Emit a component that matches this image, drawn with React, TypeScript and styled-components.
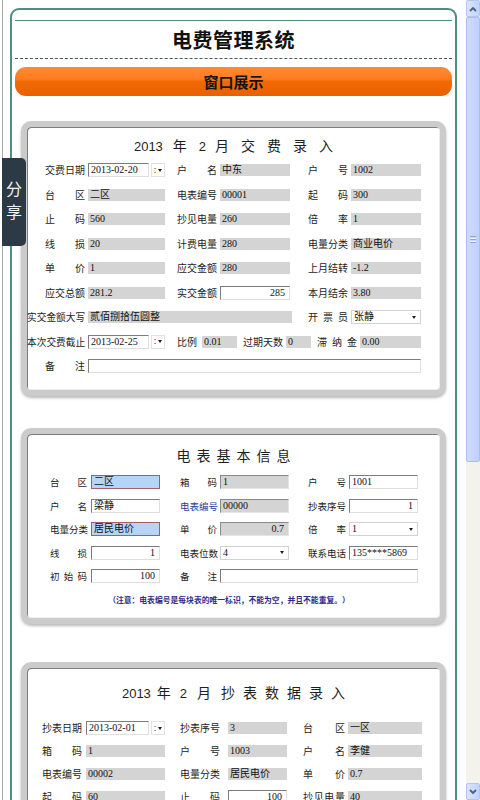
import React from "react";
import styled, { createGlobalStyle, css } from "styled-components";

const GlobalStyle = createGlobalStyle`
  html, body { margin: 0; padding: 0; background: #ffffff; }
  body { font-family: "Noto Sans CJK SC", "Noto Sans", sans-serif; color: #1a1a1a; }
  * { box-sizing: border-box; }
`;

const Screen = styled.div`
  display: flex;
  height: 800px;
  overflow: hidden;
  background: #fff;
`;

const Page = styled.div`
  position: relative;
  flex: 1;
  min-width: 0;
  margin-left: 2px;
  border-left: 1px solid #a9a9a9;
  padding: 8px 9px 0 7px;
`;

const Frame = styled.div`
  border: 2px solid #4e8c84;
  border-bottom: none;
  border-radius: 9px 9px 0 0;
  padding: 10px 3px 40px;
`;

const TopRule = styled.div`
  height: 1px;
  background: #4e8c84;
`;

const SiteTitle = styled.h1`
  margin: 0;
  height: 37px;
  line-height: 37px;
  text-align: center;
  font-size: 20px;
  font-weight: 700;
  color: #111;
  letter-spacing: 0.5px;
`;

const DashRule = styled.div`
  border-top: 1px dashed #3e5868;
`;

const Banner = styled.div`
  margin-top: 8px;
  height: 29px;
  border-radius: 11px;
  background: linear-gradient(to bottom, #ff8a35 0%, #ff7b20 42%, #f16905 50%, #e96000 100%);
  text-align: center;
  line-height: 29px;
  font-size: 15px;
  font-weight: 700;
  color: #151515;
`;

const Card = styled.section<{ $mt: number; $pt: number; $pb: number }>`
  margin: ${(p) => p.$mt}px 6px 0;
  padding: ${(p) => p.$pt}px 0 ${(p) => p.$pb}px;
  background: #fff;
  border: 6px solid #cbcbcb;
  border-radius: 10px;
  box-shadow: 0 2px 3px rgba(0, 0, 0, 0.28), inset 1px 1px 0 #7d7d7d, inset -1px -1px 0 #eeeeee;
`;

const CardTitle = styled.div<{ $mb: number }>`
  display: flex;
  justify-content: center;
  align-items: baseline;
  height: 20px;
  line-height: 20px;
  margin-bottom: ${(p) => p.$mb}px;
  font-size: 14px;
  color: #1e1e1e;
`;

const TitleNum = styled.span<{ $ml?: number }>`
  font-family: "Liberation Sans", Arial, sans-serif;
  font-size: 13px;
  margin-left: ${(p) => p.$ml ?? 0}px;
`;

const TitleWord = styled.span<{ $ml?: number; $ls?: number }>`
  margin-left: ${(p) => p.$ml ?? 0}px;
  letter-spacing: ${(p) => p.$ls ?? 0}px;
  margin-right: ${(p) => -(p.$ls ?? 0)}px;
`;

const Row = styled.div<{ $h: number }>`
  display: flex;
  align-items: center;
  height: ${(p) => p.$h}px;
`;

const LabelBox = styled.div<{ $w: number; $ml: number; $fs: number; $link?: boolean }>`
  flex: none;
  display: flex;
  justify-content: space-between;
  width: ${(p) => p.$w}px;
  margin-left: ${(p) => p.$ml}px;
  font-size: ${(p) => p.$fs}px;
  line-height: 14px;
  white-space: nowrap;
  color: ${(p) => (p.$link ? "#2f3aa6" : "#1c1c1c")};
`;

type Variant = "gray" | "grayInset" | "white" | "focus";

const variants = {
  gray: css`
    height: 12px;
    background: #d4d4d4;
  `,
  grayInset: css`
    height: 14px;
    background: #d4d4d4;
    border-style: solid;
    border-width: 1px;
    border-color: #8a8a8a #e4e4e4 #e4e4e4 #8a8a8a;
  `,
  white: css`
    height: 14px;
    background: #fff;
    border-style: solid;
    border-width: 1px;
    border-color: #7c7c7c #dedede #dedede #7c7c7c;
  `,
  focus: css`
    height: 14px;
    background: #b5d5f7;
    border: 1px solid #a55d6a;
  `,
};

const Field = styled.div<{ $w: number; $ml?: number; $v?: Variant; $right?: boolean }>`
  flex: none;
  width: ${(p) => p.$w}px;
  margin-left: ${(p) => p.$ml ?? 0}px;
  padding: 0 ${(p) => (p.$right ? 4 : 2)}px 0 2px;
  display: flex;
  align-items: center;
  justify-content: ${(p) => (p.$right ? "flex-end" : "flex-start")};
  font-family: "Liberation Serif", "Noto Sans CJK SC", serif;
  font-size: 10px;
  line-height: 1;
  color: #111;
  white-space: nowrap;
  overflow: hidden;
  ${(p) => variants[p.$v ?? "gray"]}
`;

const DropBtn = styled.div`
  flex: none;
  width: 14px;
  height: 14px;
  margin-left: 2px;
  border: 1px solid #e2e2e2;
  background: #fff;
  display: flex;
  align-items: center;
  justify-content: center;
  gap: 2px;
  font-family: "Liberation Sans", sans-serif;
  font-size: 9px;
  line-height: 1;
  color: #222;
`;

const Caret = styled.span`
  width: 0;
  height: 0;
  border-left: 2.5px solid transparent;
  border-right: 2.5px solid transparent;
  border-top: 3px solid #1e1e1e;
`;

const SelectBox = styled.div<{ $w: number; $ml: number }>`
  flex: none;
  width: ${(p) => p.$w}px;
  height: 14px;
  margin-left: ${(p) => p.$ml}px;
  border: 1px solid #d2d2d2;
  background: #fff;
  display: flex;
  align-items: center;
  justify-content: space-between;
  padding: 0 4px 0 2px;
  font-family: "Liberation Serif", "Noto Sans CJK SC", serif;
  font-size: 10px;
  line-height: 1;
  color: #111;
`;

const Note = styled.div`
  margin-top: 4.25px;
  height: 16px;
  line-height: 16px;
  padding-right: 9px;
  text-align: center;
  font-size: 7.8px;
  font-weight: 700;
  color: #2c2c8c;
  white-space: nowrap;
`;

const ShareTab = styled.div`
  position: absolute;
  left: -1px;
  top: 158px;
  width: 24px;
  height: 88px;
  background: #2b3a45;
  border-radius: 0 5px 5px 0;
  color: #f0f0f0;
  display: flex;
  flex-direction: column;
  align-items: center;
  justify-content: center;
  gap: 6px;
  font-size: 16px;
  line-height: 17px;
  padding-bottom: 4px;
`;

const ScrollBar = styled.div`
  flex: none;
  width: 14px;
  display: flex;
  flex-direction: column;
  background: #f3f2ed;
`;

const ScrollBtn = styled.div`
  flex: none;
  height: 17px;
  display: flex;
  align-items: center;
  justify-content: center;
  background: linear-gradient(to right, #dbe5fe, #c2d2fa);
  border: 1px solid #b3c5f0;
  border-radius: 2px;
`;

const Thumb = styled.div`
  flex: none;
  height: 445px;
  display: flex;
  align-items: center;
  justify-content: center;
  background: linear-gradient(to right, #cfdcfd, #bfd0fb);
  border: 1px solid #aabef0;
  border-radius: 2px;
`;

const Grip = styled.span`
  width: 6px;
  height: 1px;
  background: #8fa6dd;
  box-shadow: 0 -3px 0 #8fa6dd, 0 3px 0 #8fa6dd, 0 -1px 0 #eef3ff, 0 2px 0 #eef3ff;
`;

const Track = styled.div`
  flex: 1;
`;

const Chevron = ({ up }: { up?: boolean }) => (
  <svg width="8" height="6" viewBox="0 0 8 6">
    <polyline
      points={up ? "1,5 4,2 7,5" : "1,1 4,4 7,1"}
      fill="none"
      stroke="#4a5f8e"
      strokeWidth="1.8"
    />
  </svg>
);

const Lbl = ({
  text,
  w,
  ml = 0,
  fs = 10,
  link,
}: {
  text: string;
  w: number;
  ml?: number;
  fs?: number;
  link?: boolean;
}) => (
  <LabelBox $w={w} $ml={ml} $fs={fs} $link={link}>
    {[...text].map((c, i) => (
      <span key={i}>{c}</span>
    ))}
  </LabelBox>
);

const DatePick = ({ ml, w, value }: { ml: number; w: number; value: string }) => (
  <>
    <Field $ml={ml} $w={w} $v="white">
      {value}
    </Field>
    <DropBtn>
      <span>:</span>
      <Caret />
    </DropBtn>
  </>
);

const Select = ({ ml, w, value }: { ml: number; w: number; value: string }) => (
  <SelectBox $ml={ml} $w={w}>
    <span>{value}</span>
    <Caret />
  </SelectBox>
);

type Cell = [string, string, Variant?, boolean?];

const feeRows: Cell[][] = [
  [["台区", "二区"], ["电表编号", "00001"], ["起码", "300"]],
  [["止码", "560"], ["抄见电量", "260"], ["倍率", "1"]],
  [["线损", "20"], ["计费电量", "280"], ["电量分类", "商业电价"]],
  [["单价", "1"], ["应交金额", "280"], ["上月结转", "-1.2"]],
];

const readRows: Cell[][] = [
  [["箱码", "1"], ["户号", "1003"], ["户名", "李健"]],
  [["电表编号", "00002"], ["电量分类", "居民电价"], ["单价", "0.7"]],
  [["起码", "60"], ["止码", "100", "white", true], ["抄见电量", "40"]],
];

export default function App() {
  const h1 = 24.5;
  const h2 = 23.5;
  const h3 = 23;
  return (
    <>
      <GlobalStyle />
      <Screen>
        <Page>
          <Frame>
            <TopRule />
            <SiteTitle>电费管理系统</SiteTitle>
            <DashRule />
            <Banner>窗口展示</Banner>

            <Card $mt={25} $pt={8} $pb={11.75}>
              <CardTitle $mb={2.75}>
                <TitleNum>2013</TitleNum>
                <TitleWord $ml={10}>年</TitleWord>
                <TitleNum $ml={12}>2</TitleNum>
                <TitleWord $ml={9}>月</TitleWord>
                <TitleWord $ml={12} $ls={12}>
                  交费录入
                </TitleWord>
              </CardTitle>
              <Row $h={h1}>
                <Lbl ml={18} w={40} text="交费日期" />
                <DatePick ml={3} w={61} value="2013-02-20" />
                <Lbl ml={12} w={40} text="户名" />
                <Field $ml={3} $w={70}>中东</Field>
                <Lbl ml={18} w={40} text="户号" />
                <Field $ml={3} $w={70}>1002</Field>
              </Row>
              {feeRows.map((r, i) => (
                <Row $h={h1} key={i}>
                  <Lbl ml={18} w={40} text={r[0][0]} />
                  <Field $ml={3} $w={77}>{r[0][1]}</Field>
                  <Lbl ml={12} w={40} text={r[1][0]} />
                  <Field $ml={3} $w={70}>{r[1][1]}</Field>
                  <Lbl ml={18} w={40} text={r[2][0]} />
                  <Field $ml={3} $w={70}>{r[2][1]}</Field>
                </Row>
              ))}
              <Row $h={h1}>
                <Lbl ml={18} w={40} text="应交总额" />
                <Field $ml={3} $w={77}>281.2</Field>
                <Lbl ml={12} w={40} text="实交金额" />
                <Field $ml={3} $w={70} $v="white" $right>
                  285
                </Field>
                <Lbl ml={18} w={40} text="本月结余" />
                <Field $ml={3} $w={70}>3.80</Field>
              </Row>
              <Row $h={h1}>
                <Lbl ml={0} w={58} fs={9.7} text="实交金额大写" />
                <Field $ml={3} $w={204}>贰佰捌拾伍圆整</Field>
                <Lbl ml={16} w={40} text="开票员" />
                <Select ml={3} w={70} value="张静" />
              </Row>
              <Row $h={h1}>
                <Lbl ml={0} w={58} fs={9.7} text="本次交费截止" />
                <DatePick ml={3} w={61} value="2013-02-25" />
                <Lbl ml={12} w={20} text="比例" />
                <Field $ml={5} $w={35}>0.01</Field>
                <Lbl ml={6} w={40} text="过期天数" />
                <Field $ml={3} $w={25}>0</Field>
                <Lbl ml={6} w={40} text="滞纳金" />
                <Field $ml={3} $w={61}>0.00</Field>
              </Row>
              <Row $h={h1}>
                <Lbl ml={18} w={40} text="备注" />
                <Field $ml={3} $w={333} $v="white" />
              </Row>
            </Card>

            <Card $mt={32} $pt={11} $pb={10}>
              <CardTitle $mb={5.25}>
                <TitleWord $ls={6}>电表基本信息</TitleWord>
              </CardTitle>
              <Row $h={h2}>
                <Lbl ml={23} w={37} fs={9.5} text="台区" />
                <Field $ml={4} $w={69} $v="focus">二区</Field>
                <Lbl ml={20} w={37} fs={9.5} text="箱码" />
                <Field $ml={3} $w={69} $v="grayInset">1</Field>
                <Lbl ml={19} w={38} fs={9.5} text="户号" />
                <Field $ml={3} $w={69} $v="white">1001</Field>
              </Row>
              <Row $h={h2}>
                <Lbl ml={23} w={37} fs={9.5} text="户名" />
                <Field $ml={4} $w={69} $v="white">梁静</Field>
                <Lbl ml={20} w={37} fs={9.5} text="电表编号" link />
                <Field $ml={3} $w={69} $v="grayInset">00000</Field>
                <Lbl ml={19} w={38} fs={9.5} text="抄表序号" />
                <Field $ml={3} $w={69} $v="white" $right>1</Field>
              </Row>
              <Row $h={h2}>
                <Lbl ml={23} w={37} fs={9.5} text="电量分类" />
                <Field $ml={4} $w={69} $v="focus">居民电价</Field>
                <Lbl ml={20} w={37} fs={9.5} text="单价" />
                <Field $ml={3} $w={69} $v="grayInset" $right>0.7</Field>
                <Lbl ml={19} w={38} fs={9.5} text="倍率" />
                <Select ml={3} w={69} value="1" />
              </Row>
              <Row $h={h2}>
                <Lbl ml={23} w={37} fs={9.5} text="线损" />
                <Field $ml={4} $w={69} $v="white" $right>1</Field>
                <Lbl ml={20} w={37} fs={9.5} text="电表位数" />
                <Select ml={3} w={69} value="4" />
                <Lbl ml={19} w={38} fs={9.5} text="联系电话" />
                <Field $ml={3} $w={69} $v="white">135****5869</Field>
              </Row>
              <Row $h={h2}>
                <Lbl ml={23} w={37} fs={9.5} text="初始码" />
                <Field $ml={4} $w={69} $v="white" $right>100</Field>
                <Lbl ml={20} w={37} fs={9.5} text="备注" />
                <Field $ml={3} $w={198} $v="white" />
              </Row>
              <Note>（注意：电表编号是每块表的唯一标识，不能为空，并且不能重复。）</Note>
            </Card>

            <Card $mt={38} $pt={14} $pb={12}>
              <CardTitle $mb={14.5}>
                <TitleNum>2013</TitleNum>
                <TitleWord $ml={6}>年</TitleWord>
                <TitleNum $ml={9}>2</TitleNum>
                <TitleWord $ml={10}>月</TitleWord>
                <TitleWord $ml={10} $ls={8}>
                  抄表数据录入
                </TitleWord>
              </CardTitle>
              <Row $h={h3}>
                <Lbl ml={15} w={40} text="抄表日期" />
                <DatePick ml={4} w={63} value="2013-02-01" />
                <Lbl ml={15} w={40} text="抄表序号" />
                <Field $ml={8} $w={59}>3</Field>
                <Lbl ml={16} w={42} text="台区" />
                <Field $ml={3} $w={74}>一区</Field>
              </Row>
              {readRows.map((r, i) => (
                <Row $h={h3} key={i}>
                  <Lbl ml={15} w={40} text={r[0][0]} />
                  <Field $ml={4} $w={79}>{r[0][1]}</Field>
                  <Lbl ml={15} w={40} text={r[1][0]} />
                  <Field $ml={8} $w={59} $v={r[1][2]} $right={r[1][3]}>
                    {r[1][1]}
                  </Field>
                  <Lbl ml={16} w={42} text={r[2][0]} />
                  <Field $ml={3} $w={74}>{r[2][1]}</Field>
                </Row>
              ))}
            </Card>
          </Frame>
          <ShareTab>
            <span>分</span>
            <span>享</span>
          </ShareTab>
        </Page>
        <ScrollBar>
          <ScrollBtn>
            <Chevron up />
          </ScrollBtn>
          <Thumb>
            <Grip />
          </Thumb>
          <Track />
          <ScrollBtn>
            <Chevron />
          </ScrollBtn>
        </ScrollBar>
      </Screen>
    </>
  );
}
